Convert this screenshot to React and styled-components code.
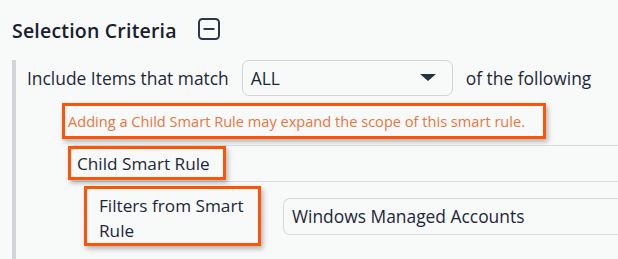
import React from "react";
import styled, { createGlobalStyle } from "styled-components";

const Global = createGlobalStyle`
  html, body { margin: 0; padding: 0; background: #f8f9f9; overflow: hidden; }
  body { font-family: "Open Sans", "Noto Sans", sans-serif; color: #1d2838; }
`;

const Page = styled.div`
  padding: 10px 0 0 12px;
  width: 100%;
  height: 259px;
  box-sizing: border-box;
`;

const Header = styled.div`
  display: flex;
  align-items: center;
  gap: 21px;
  height: 40px;
  margin-bottom: 10px;
`;

const Title = styled.h2`
  margin: 0;
  font-size: 19.5px;
  font-weight: 600;
  color: #16202e;
  letter-spacing: 0.2px;
`;

const CollapseIcon = styled.svg`
  width: 22px;
  height: 22px;
  display: block;
  margin-top: -2px;
`;

const Section = styled.div`
  border-left: 4px solid #d5d5d9;
  padding-left: 11px;
  height: 200px;
`;

const MatchRow = styled.div`
  display: flex;
  align-items: center;
  gap: 13px;
  font-size: 17.4px;
`;

const Select = styled.div`
  width: 211px;
  height: 36px;
  box-sizing: border-box;
  border: 1px solid #d3d4d6;
  border-radius: 7px;
  display: flex;
  align-items: center;
  justify-content: space-between;
  padding: 0 16px 0 8px;
  font-size: 17.4px;
  background: #f8f9f9;
`;

const Caret = styled.svg`
  width: 16px;
  height: 8px;
  display: block;
`;

const Annotated = styled.div`
  border: 3px solid #fe5407;
  box-shadow: 2px 3px 5px rgba(0, 0, 0, 0.28);
  box-sizing: border-box;
`;

const Warning = styled(Annotated)`
  margin: 7px 0 0 35px;
  width: 484px;
  height: 36px;
  display: flex;
  align-items: center;
  padding-left: 3px;
  font-size: 14.6px;
  color: #e8763e;
  white-space: nowrap;
`;

const ChildRow = styled.div`
  margin: 6px 0 0 41px;
  height: 37px;
  box-sizing: border-box;
  border: 1px solid #d8d9db;
  border-right: none;
  border-radius: 7px 0 0 7px;
  display: flex;
  align-items: flex-start;
`;

const ChildLabel = styled(Annotated)`
  margin-left: -1px;
  width: 158px;
  height: 34px;
  padding-left: 6px;
  display: flex;
  align-items: center;
  font-size: 17.2px;
  white-space: nowrap;
  background: #f8f9f9;
`;

const FilterRow = styled.div`
  margin: 4px 0 0 57px;
  display: flex;
  align-items: center;
  gap: 22px;
`;

const FilterLabel = styled(Annotated)`
  flex: none;
  width: 177px;
  height: 60px;
  padding: 4px 12px 0 12px;
  font-size: 17.2px;
  line-height: 25px;
`;

const Input = styled.div`
  flex: 1;
  min-width: 0;
  height: 37px;
  box-sizing: border-box;
  border: 1px solid #d8d9db;
  border-right: none;
  border-radius: 7px 0 0 7px;
  display: flex;
  align-items: center;
  padding-left: 8px;
  font-size: 17.4px;
  white-space: nowrap;
  overflow: hidden;
`;

export default function App() {
  return (
    <Page>
      <Global />
      <Header>
        <Title>Selection Criteria</Title>
        <CollapseIcon viewBox="0 0 22 22">
          <rect x="1" y="1" width="20" height="20" rx="3.5" fill="none" stroke="#2c3747" strokeWidth="2" />
          <line x1="5.5" y1="11" x2="16.5" y2="11" stroke="#2c3747" strokeWidth="2" />
        </CollapseIcon>
      </Header>
      <Section>
        <MatchRow>
          <span>Include Items that match</span>
          <Select>
            <span>ALL</span>
            <Caret viewBox="0 0 16 8">
              <path d="M0 0 L16 0 L8 7 Z" fill="#263141" />
            </Caret>
          </Select>
          <span>of the following</span>
        </MatchRow>
        <Warning>Adding a Child Smart Rule may expand the scope of this smart rule.</Warning>
        <ChildRow>
          <ChildLabel>Child Smart Rule</ChildLabel>
        </ChildRow>
        <FilterRow>
          <FilterLabel>Filters from Smart Rule</FilterLabel>
          <Input>Windows Managed Accounts</Input>
        </FilterRow>
      </Section>
    </Page>
  );
}
